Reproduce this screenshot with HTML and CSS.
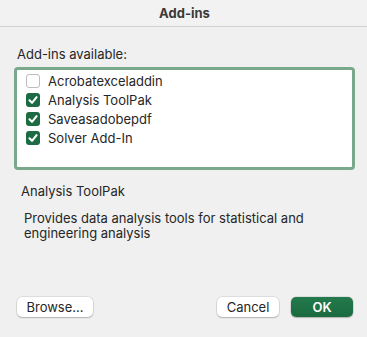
FILE: index.html
```html
<!DOCTYPE html>
<html>
<head>
<meta charset="utf-8">
<link rel="stylesheet" href="styles.css">
</head>
<body>
<div class="dialog">
  <div class="titlebar">Add-ins</div>
  <div class="content">
    <div class="label">Add-ins available:</div>
    <div class="listbox">
      <div class="item"><span class="cb"></span><span>Acrobatexceladdin</span></div>
      <div class="item"><span class="cb on"><svg viewBox="0 0 14 14" width="14" height="14"><path d="M3.5 7.3 L6 9.8 L10.6 4.2" fill="none" stroke="#fff" stroke-width="2.1" stroke-linecap="round" stroke-linejoin="round"/></svg></span><span>Analysis ToolPak</span></div>
      <div class="item"><span class="cb on"><svg viewBox="0 0 14 14" width="14" height="14"><path d="M3.5 7.3 L6 9.8 L10.6 4.2" fill="none" stroke="#fff" stroke-width="2.1" stroke-linecap="round" stroke-linejoin="round"/></svg></span><span>Saveasadobepdf</span></div>
      <div class="item"><span class="cb on"><svg viewBox="0 0 14 14" width="14" height="14"><path d="M3.5 7.3 L6 9.8 L10.6 4.2" fill="none" stroke="#fff" stroke-width="2.1" stroke-linecap="round" stroke-linejoin="round"/></svg></span><span>Solver Add-In</span></div>
    </div>
    <div class="name">Analysis ToolPak</div>
    <div class="desc">Provides data analysis tools for statistical and engineering analysis</div>
    <div class="buttons">
      <button class="btn">Browse...</button>
      <div class="spacer"></div>
      <button class="btn cancel">Cancel</button>
      <button class="btn ok">OK</button>
    </div>
  </div>
</div>
</body>
</html>
```

FILE: styles.css
```css
html, body {
  margin: 0;
  padding: 0;
}
body {
  width: 367px;
  height: 337px;
  background: #eff0ef;
  font-family: Inter, "Liberation Sans", sans-serif;
  font-size: 13px;
  color: #262626;
  overflow: hidden;
}
.dialog {
  display: flex;
  flex-direction: column;
  height: 337px;
}
.titlebar {
  height: 27px;
  box-sizing: border-box;
  border-bottom: 1px solid #d3d3d3;
  background: #f2f2f2;
  display: flex;
  align-items: center;
  justify-content: center;
  font-weight: 700;
  color: #3a3a3a;
  padding-left: 2px;
}
.content {
  padding: 0 12px 0 14px;
  display: flex;
  flex-direction: column;
}
.label {
  margin-top: 19px;
  padding-left: 3px;
  line-height: 16px;
}
.listbox {
  margin-top: 5px;
  width: 341px;
  height: 103px;
  box-sizing: border-box;
  border: 3px solid #7aa88c;
  border-radius: 4px;
  background: #fff;
  padding: 4px 0 0 9px;
  display: flex;
  flex-direction: column;
  gap: 5px;
}
.item {
  display: flex;
  align-items: center;
  gap: 8px;
  height: 14px;
  line-height: 14px;
}
.cb {
  width: 14px;
  height: 14px;
  box-sizing: border-box;
  border: 1px solid #bdbdbd;
  border-radius: 3px;
  background: #fff;
  display: flex;
}
.cb.on {
  border: none;
  background: #1d6b42;
}
.name {
  margin-top: 13px;
  padding-left: 7px;
  line-height: 16px;
}
.desc {
  margin-top: 12px;
  padding-left: 10px;
  line-height: 15px;
  width: 300px;
}
.buttons {
  margin-top: 56px;
  display: flex;
  align-items: center;
  padding-left: 3px;
}
.spacer {
  flex: 1;
}
.btn {
  font-family: inherit;
  font-size: 13px;
  color: #262626;
  height: 20px;
  border: none;
  border-radius: 5px;
  background: #fff;
  box-shadow: 0 0 0 0.5px rgba(0,0,0,0.15), 0 1px 1.5px rgba(0,0,0,0.2);
  padding: 0;
  width: 76px;
}
.cancel {
  width: 62px;
  margin-right: 12px;
}
.ok {
  width: 62px;
  margin-right: 2px;
  background: linear-gradient(#237a4c, #1b6a40);
  color: #fff;
  font-weight: 600;
}
```
